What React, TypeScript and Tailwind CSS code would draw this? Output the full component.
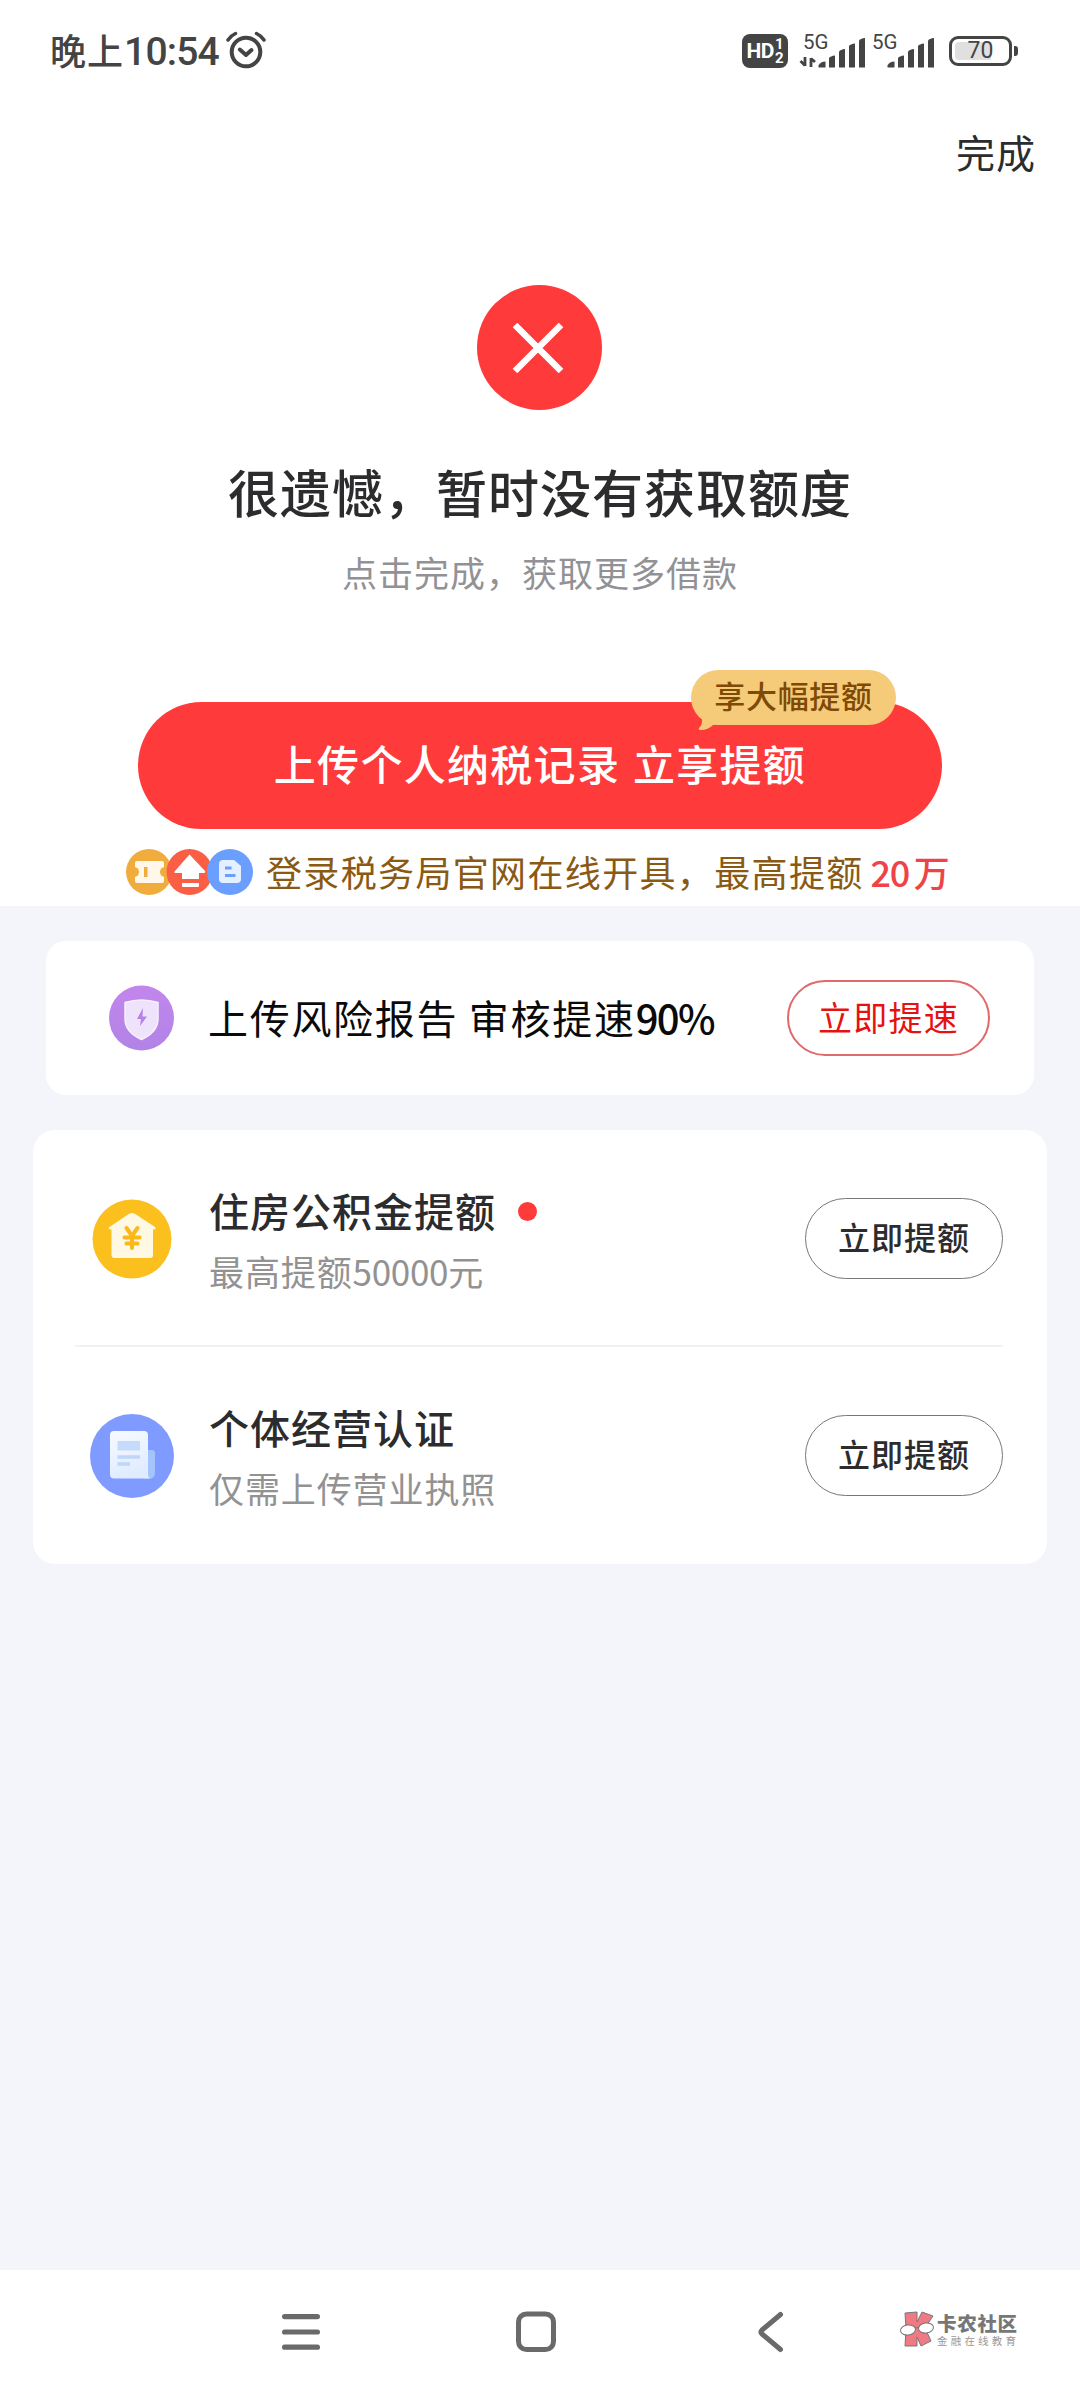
import React from 'react';

const SIGNAL_BARS = [
  'M0 30 L0 28 Q2 24 7 24 L7 30 Z',
  'M10.5 30 V20.5 Q12 18.5 16.5 18 V30 Z',
  'M20.5 30 V14 Q22 12 26.5 11.5 V30 Z',
  'M30.5 30 V8.5 Q32 6.5 36.5 6 V30 Z',
  'M40.5 30 V3 Q42 1 46.5 0.5 V30 Z',
];

export default function App() {
  return (
    <div className="flex h-[2400px] w-[1080px] flex-col overflow-hidden bg-white font-['Noto_Sans_CJK_SC',sans-serif] text-[#2c2c2e]">
      <StatusBar />
      <div className="flex h-[110px] items-center justify-end pr-[44px] pb-[8px] text-[39px] leading-[50px] tracking-[1px]">
        <button>完成</button>
      </div>
      <ResultSection />
      <main className="flex flex-1 flex-col bg-[#f3f5fa] pt-[35px]">
        <SpeedUpCard />
        <div className="mt-[35px] ml-[33px] h-[434px] w-[1014px] rounded-[22px] bg-white pr-[44px] pl-[42px]">
          <OfferRow
            icon={<HouseIcon />}
            title="住房公积金提额"
            subtitle={
              <>
                最高提额<span className="tracking-[-0.3px]">50000</span>元
              </>
            }
            hasDot
          />
          <div className="h-[2px] bg-[#f1f1f2]" />
          <OfferRow icon={<DocumentIcon />} title="个体经营认证" subtitle="仅需上传营业执照" />
        </div>
      </main>
      <NavBar />
    </div>
  );
}

const StatusBar: React.FC = () => (
  <div className="flex h-[100px] shrink-0 items-center justify-between pr-[62px] pl-[50px] text-[#444]">
    <div className="flex items-center">
      <span className="pb-[3px] text-[36px] leading-[50px] font-medium tracking-[1px]">晚上</span>
      <span className="pt-[3px] font-['Roboto',sans-serif] text-[39px] leading-[50px] font-medium tracking-[-0.8px]">10:54</span>
      <svg className="ml-[7px]" width="40" height="38" viewBox="0 0 40 38" fill="none" stroke="#444" strokeWidth="4" strokeLinecap="round" strokeLinejoin="round">
        <circle cx="20" cy="21" r="14.3" />
        <path d="M13.8 18.5 L20 24 L25.5 19" />
        <path d="M2 9 Q5 4.5 9.5 2.5 M38 9 Q35 4.5 30.5 2.5" strokeWidth="3.5" />
      </svg>
    </div>
    <div className="flex items-center pt-[2px]">
      <div className="flex h-[34px] w-[46px] items-center justify-center gap-[1px] rounded-[8px] bg-[#444] font-['Roboto',sans-serif] font-bold text-white">
        <span className="text-[21px] leading-[34px] tracking-[-0.5px]">HD</span>
        <span className="flex flex-col text-[15px] leading-[14px]">
          <span>1</span>
          <span>2</span>
        </span>
      </div>
      <Signal hasArrows className="ml-[15px] overflow-visible" />
      <Signal className="ml-[6px] overflow-visible" />
      <div className="ml-[14px] flex h-[30px] w-[63px] items-center justify-center rounded-[9px] border-[3px] border-[#444] p-[3px]">
        <div className="flex h-full w-full items-center justify-center rounded-[4px] bg-linear-to-r from-[#e0e0e0] from-70% to-white to-70% font-['Roboto',sans-serif] text-[23px] leading-[18px]">
          70
        </div>
      </div>
      <div className="ml-[2px] h-[10px] w-[4px] rounded-r-[3px] bg-[#444]" />
    </div>
  </div>
);

const Signal: React.FC<{ hasArrows?: boolean; className: string }> = ({ hasArrows, className }) => (
  <svg className={className} width="63" height="46" viewBox="0 -6 63 46" fill="#444">
    <text x="0" y="15" fontFamily="Roboto, sans-serif" fontSize="20.5">5G</text>
    <g transform="translate(15.5 3.5)">
      {SIGNAL_BARS.map((d) => (
        <path key={d} d={d} />
      ))}
    </g>
    {hasArrows && (
      <path d="M2 23 V32 M2 31.5 L-2.5 27 M8 33 V24 M8 24.5 L12 28" stroke="#444" strokeWidth="2.8" fill="none" />
    )}
  </svg>
);

const ResultSection: React.FC = () => (
  <section className="flex h-[696px] shrink-0 flex-col items-center pt-[75px]">
    <div className="mr-[2px] flex h-[125px] w-[125px] shrink-0 items-center justify-center rounded-full bg-[#ff3a3a]">
      <svg className="mr-[2px]" width="52" height="52" viewBox="0 0 52 52" stroke="#fff" strokeWidth="6.5">
        <path d="M3 3 L49 49 M49 3 L3 49" />
      </svg>
    </div>
    <h1 className="mt-[46px] text-[51px] leading-[70px] font-medium tracking-[1px]">很遗憾，暂时没有获取额度</h1>
    <p className="mt-[21px] text-[35px] leading-[50px] tracking-[1px] text-[#929296]">点击完成，获取更多借款</p>
    <button className="relative mt-[105px] h-[127px] w-[804px] shrink-0 rounded-full bg-[#ff3a3a] pb-[6px] text-[42px] font-medium tracking-[1.3px] text-white [word-spacing:2px]">
      上传个人纳税记录 立享提额
      {/* corner badge */}
      <span className="absolute top-[-32px] right-[46px] h-[55px] w-[205px] rounded-full bg-[#f5cb7a] text-center text-[31px] leading-[49px] tracking-[0.7px] text-[#7f4a06]">
        享大幅提额
        <svg className="absolute top-[46px] left-[6px]" width="22" height="14" viewBox="0 0 22 14" fill="#f5cb7a">
          <path d="M5 0 Q6 9 2 12 Q1 14 4 14 Q11 14 16 9 L22 8 V0 Z" />
        </svg>
      </span>
    </button>
    <div className="flex w-full items-center pt-[17px] pl-[126px]">
      <BenefitIcons />
      <span className="ml-[12px] pb-[2px] text-[36px] leading-[50px] tracking-[1.35px] text-[#8a5a14]">登录税务局官网在线开具，最高提额</span>
      <span className="ml-[7px] pb-[2px] text-[36px] leading-[50px] font-medium tracking-[-1.5px] text-[#ee4448]">20</span>
      <span className="ml-[5px] pb-[2px] text-[36px] leading-[50px] font-medium text-[#ee4448]">万</span>
    </div>
  </section>
);

const BenefitIcons: React.FC = () => (
  <svg width="128" height="46" viewBox="0 0 128 46">
    <circle cx="23" cy="23" r="23" fill="#f0ad3e" />
    <path d="M11 12 H36 Q38 12 38 14 V18 Q34 19 34 23 Q34 27 38 28 V32 Q38 34 36 34 H11 Q9 34 9 32 V28 Q13 27 13 23 Q13 19 9 18 V14 Q9 12 11 12 Z" fill="#fff8ea" />
    <rect x="18" y="18" width="3.5" height="10" fill="#f0ad3e" />
    <circle cx="63.5" cy="23" r="23" fill="#fa5f45" />
    <path d="M63.5 5.5 L79 22 Q80 24 77 24 H73 V30 H56 V24 H50 Q47 24 49 22 Z M56 34 H73 V37 Q73 38 72 38 H57 Q56 38 56 37 Z" fill="#fff" />
    <circle cx="104" cy="23" r="23" fill="#6a9fff" />
    <path d="M97 11 H108 L115 17 V30 Q115 34 111 34 H97 Q93 34 93 30 V15 Q93 11 97 11 Z" fill="#e4f0ff" />
    <path d="M99 19 H105.5 M99 26.5 H109.5" stroke="#6a9fff" strokeWidth="3.2" />
  </svg>
);

const SpeedUpCard: React.FC = () => (
  <div className="ml-[46px] flex h-[154px] w-[988px] items-center rounded-[20px] bg-white pr-[44px] pl-[63px]">
    <ShieldIcon />
    <span className="ml-[34px] pb-[3px] text-[40px] leading-[60px] tracking-[1.7px] text-[#0a0a0a]">
      上传风险报告 审核提速<b className="font-medium tracking-[-1.6px]">90%</b>
    </span>
    <button className="ml-auto h-[76px] w-[203px] rounded-full border-2 border-[#e06a6a] pb-[3px] text-[34px] leading-[50px] tracking-[1.2px] text-[#e61212]">
      立即提速
    </button>
  </div>
);

interface OfferRowProps {
  icon: React.ReactNode;
  title: string;
  subtitle: React.ReactNode;
  hasDot?: boolean;
}

const OfferRow: React.FC<OfferRowProps> = ({ icon, title, subtitle, hasDot }) => (
  <div className="flex h-[215px] items-center pt-[3px] pl-[15px]">
    {icon}
    <div className="ml-[35px] flex flex-col pt-[2px]">
      <div className="flex items-center">
        <h2 className="text-[40px] leading-[60px] font-medium tracking-[1px]">{title}</h2>
        {hasDot && <i className="mt-[4px] ml-[22px] h-[19px] w-[19px] rounded-full bg-[#ff3a3a]" />}
      </div>
      <p className="pt-[1px] text-[35px] leading-[60px] tracking-[0.9px] text-[#929292]">{subtitle}</p>
    </div>
    <button className="mb-[2px] ml-auto h-[81px] w-[198px] rounded-full border border-[#777] pb-[5px] text-[32px] leading-[50px] font-medium tracking-[1px]">
      立即提额
    </button>
  </div>
);

const ShieldIcon: React.FC = () => (
  <svg width="65" height="66" viewBox="0 0 65 66">
    <defs>
      <linearGradient id="shield" x1="0" y1="0" x2="0" y2="1">
        <stop offset="0" stopColor="#c286ec" />
        <stop offset="1" stopColor="#b183e6" />
      </linearGradient>
    </defs>
    <circle cx="32.5" cy="33" r="32.5" fill="url(#shield)" />
    <path d="M16 17.5 Q32.5 12.5 49 17.5 V34 Q49 47 32.5 54.5 Q16 47 16 34 Z" fill="#efe3fc" stroke="#f8f0ff" strokeWidth="1.5" />
    <path d="M34 23 L28 34 H32 L31 41 L38 31.5 H33.5 Z" fill="#b583e8" />
  </svg>
);

const HouseIcon: React.FC = () => (
  <svg width="84" height="84" viewBox="0 0 84 84">
    <circle cx="42" cy="42" r="39.5" fill="#fcc01e" />
    <path d="M42 16 Q44 16 46 17.5 L65 30 Q67 32 63 32.5 V58 Q63 61 60 61 H24.5 Q21.5 61 21.5 58 V32.5 Q17 32 19.5 30 L38 17.5 Q40 16 42 16 Z" fill="#fff8e3" />
    <path d="M36.5 31 L42 39 L47.5 31 M34.5 40.5 H49.5 M36.5 46.5 H47.5 M42 40 V51" stroke="#fcb81b" strokeWidth="4" strokeLinecap="round" fill="none" />
  </svg>
);

const DocumentIcon: React.FC = () => (
  <svg width="84" height="84" viewBox="0 0 84 84">
    <defs>
      <linearGradient id="paper" x1="0" y1="0" x2="0.3" y2="1">
        <stop offset="0" stopColor="#f8fbff" />
        <stop offset="1" stopColor="#dfecff" />
      </linearGradient>
    </defs>
    <circle cx="42" cy="42" r="42" fill="#7f9bff" />
    <path d="M56 36 H62 Q65 36 65 39 V59 Q65 64.5 59 64.5 H54 Z" fill="#a3c4fd" />
    <path d="M24 17 H54 Q58 17 58 21 V60 Q58 64 61 64.5 H24 Q20 64.5 20 60.5 V21 Q20 17 24 17 Z" fill="url(#paper)" />
    <rect x="27.5" y="27" width="22.5" height="9.5" fill="#c6dafb" />
    <path d="M27.5 43 H50 M27.5 50 H40" stroke="#c0d5fa" strokeWidth="3.4" />
  </svg>
);

const NavBar: React.FC = () => (
  <nav className="flex h-[130px] shrink-0 items-start bg-white pt-[40px] pl-[281px]">
    <svg width="40" height="44" viewBox="0 0 40 44" stroke="#6a6a6a" strokeWidth="5.2" strokeLinecap="round">
      <path d="M3.6 6.6 H36.4 M3.6 22 H36.4 M3.6 37.2 H36.4" />
    </svg>
    <svg className="ml-[194px]" width="42" height="44" viewBox="0 0 42 44" fill="none" stroke="#6a6a6a" strokeWidth="5">
      <rect x="3.5" y="4" width="35" height="35.5" rx="8" />
    </svg>
    <svg className="ml-[200px]" width="28" height="44" viewBox="0 0 28 44" fill="none" stroke="#6a6a6a" strokeWidth="5" strokeLinecap="round" strokeLinejoin="round">
      <path d="M23.5 4.5 L5 20 Q3 22 5 24 L23.5 39.5" />
    </svg>
    <div className="ml-[115px] flex items-center">
      <svg width="35" height="38" viewBox="0 0 35 38" stroke="#777">
        <path d="M5 3 L17 2 V12 L22 2 L33 6 L25 18 L31 31 L21 36 L17 27 V36 H5 L6 19 Z" fill="#ee7a84" />
        <ellipse cx="8" cy="20" rx="7.5" ry="5" fill="#fff" transform="rotate(-8 8 20)" />
        <ellipse cx="26" cy="18" rx="7.5" ry="5" fill="#fff" transform="rotate(-8 26 18)" />
        <path d="M15 18 L19 17.5" />
      </svg>
      <div className="ml-[2px] flex flex-col text-[#777]">
        <span className="text-[19.5px] leading-[22px] font-black tracking-[0.7px]">卡农社区</span>
        <span className="text-[10.5px] leading-[13px] tracking-[3.2px] text-[#999]">金融在线教育</span>
      </div>
    </div>
  </nav>
);
